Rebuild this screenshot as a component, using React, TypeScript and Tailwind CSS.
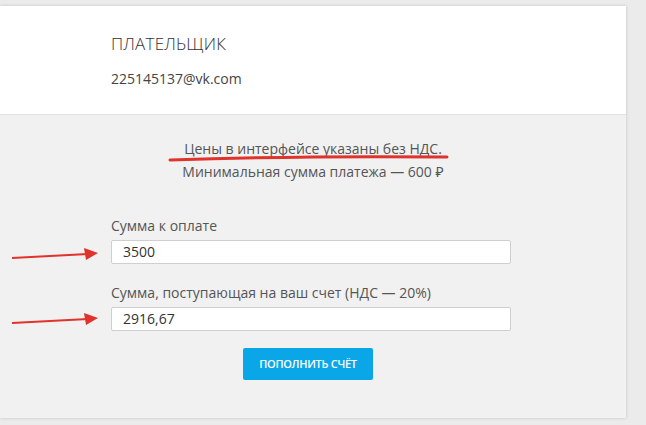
import React from 'react';

const font = { fontFamily: '"Open Sans", "Noto Sans", sans-serif' };

const Field = ({ label, value }: { label: string; value: string }) => (
  <div className="flex flex-col">
    <label className="text-[14px] leading-[20px] text-[#555]">{label}</label>
    <div className="mt-[4px] h-[24px] w-[400px] rounded-[2px] border border-[#cfcfcf] bg-white pl-[11px] text-[14px] leading-[22px] text-[#333]">
      {value}
    </div>
  </div>
);

export default function App() {
  return (
    <div className="relative h-[425px] w-[646px] overflow-hidden bg-[#ebebeb] pt-[6px]" style={font}>
      <div className="w-[626px] bg-white shadow-[0_0_3px_rgba(0,0,0,0.18)]">
        {/* payer */}
        <div className="h-[108px] pl-[111px] pt-[27px]">
          <div className="text-[17px] font-light leading-[22px] tracking-[0.2px] text-[#333]">ПЛАТЕЛЬЩИК</div>
          <div className="mt-[14px] text-[14px] leading-[20px] text-[#444]">225145137@vk.com</div>
        </div>

        {/* payment form */}
        <div className="h-[304px] border-t border-[#e2e2e2] bg-[#f1f1f1] px-[111px] pt-[22px]">
          <div className="flex flex-col items-center text-[14px] leading-[23px] text-[#555]">
            <p>Цены в интерфейсе указаны без НДС.</p>
            <p>Минимальная сумма платежа — 600 ₽</p>
          </div>

          <div className="mt-[33px] flex flex-col gap-[19px]">
            <Field label="Сумма к оплате" value="3500" />
            <Field label="Сумма, поступающая на ваш счет (НДС — 20%)" value="2916,67" />
          </div>

          <div className="ml-[132px] mt-[17px]">
            <button className="h-[32px] w-[130px] rounded-[2px] bg-[#0aa6e8] text-[11px] font-semibold tracking-[-0.3px] text-white">
              ПОПОЛНИТЬ СЧЁТ
            </button>
          </div>
        </div>
      </div>

      {/* red annotations */}
      <svg className="absolute left-0 top-0" width="646" height="425" viewBox="0 0 646 425" fill="none">
        <path d="M170 160 Q300 155.5 447 157" stroke="#e0332b" strokeWidth="3" strokeLinecap="round" />
        <path d="M12 258 L88 254" stroke="#e0332b" strokeWidth="2" />
        <polygon points="98,253 84,248 86,260" fill="#e0332b" />
        <path d="M12 323 L88 319" stroke="#e0332b" strokeWidth="2" />
        <polygon points="98,318 84,313 86,325" fill="#e0332b" />
      </svg>
    </div>
  );
}
